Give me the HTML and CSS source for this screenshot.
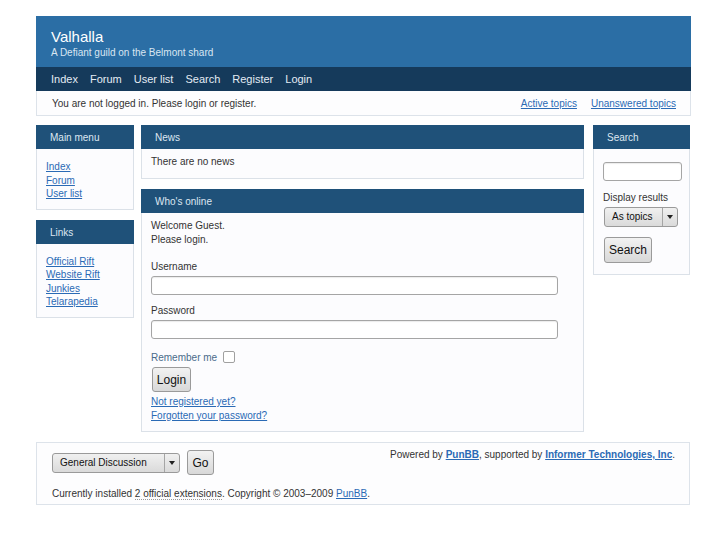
FILE: index.html
```html
<!DOCTYPE html>
<html lang="en">
<head>
    <meta charset="UTF-8">
    <meta name="viewport" content="width=device-width, initial-scale=1.0">
    <title>Valhalla</title>
    <link rel="stylesheet" href="styles.css">
</head>
<body>
    <div id="page">
        <div id="brd-head">
            <p class="title">Valhalla</p>
            <p class="desc">A Defiant guild on the Belmont shard</p>
        </div>
        <div id="brd-navlinks">
            <a href="">Index</a>
            <a href="">Forum</a>
            <a href="">User list</a>
            <a href="">Search</a>
            <a href="">Register</a>
            <a href="">Login</a>
        </div>
        <div id="brd-visit">
            <p>You are not logged in. Please login or register.</p>
            <p class="visit-links"><a href="">Active topics</a><a href="">Unanswered topics</a></p>
        </div>

        <div id="columns">
            <!-- left column -->
            <div class="col-left">
                <div class="box">
                    <h2 class="box-head">Main menu</h2>
                    <div class="box-body links">
                        <a href="">Index</a>
                        <a href="">Forum</a>
                        <a href="">User list</a>
                    </div>
                </div>
                <div class="box">
                    <h2 class="box-head">Links</h2>
                    <div class="box-body links">
                        <a href="">Official Rift</a>
                        <a href="">Website Rift</a>
                        <a href="">Junkies</a>
                        <a href="">Telarapedia</a>
                    </div>
                </div>
            </div>

            <!-- main column -->
            <div class="col-main">
                <div class="box">
                    <h2 class="box-head">News</h2>
                    <div class="box-body news">
                        <p>There are no news</p>
                    </div>
                </div>
                <div class="box">
                    <h2 class="box-head">Who's online</h2>
                    <div class="box-body login">
                        <p>Welcome Guest.<br>Please login.</p>
                        <label class="field-label">Username</label>
                        <div class="text-input"></div>
                        <label class="field-label">Password</label>
                        <div class="text-input"></div>
                        <div class="remember">Remember me <span class="checkbox"></span></div>
                        <button type="button" class="btn login-btn">Login</button>
                        <div class="login-links">
                            <a href="">Not registered yet?</a>
                            <a href="">Forgotten your password?</a>
                        </div>
                    </div>
                </div>
            </div>

            <!-- right column -->
            <div class="col-right">
                <div class="box">
                    <h2 class="box-head">Search</h2>
                    <div class="box-body search">
                        <div class="text-input small"></div>
                        <p class="display">Display results</p>
                        <div class="combo topics"><span class="combo-text">As topics</span><span class="combo-arrow"></span></div>
                        <button type="button" class="btn search-btn">Search</button>
                    </div>
                </div>
            </div>
        </div>

        <div id="brd-footer">
            <div class="foot-top">
                <div class="jump">
                    <div class="combo forum"><span class="combo-text">General Discussion</span><span class="combo-arrow"></span></div>
                    <button type="button" class="btn go-btn">Go</button>
                </div>
                <p class="powered">Powered by <a href="">PunBB</a>, supported by <a href="">Informer Technologies, Inc</a>.</p>
            </div>
            <p class="copyright">Currently installed <span class="dotted">2 official extensions</span>. Copyright &copy; 2003&ndash;2009 <a href="">PunBB</a>.</p>
        </div>
    </div>
</body>
</html>
```

FILE: styles.css
```css
* {
    margin: 0;
    padding: 0;
    box-sizing: border-box;
    font-family: "Liberation Sans", Arial, sans-serif;
}

body {
    background-color: #ffffff;
    color: #333;
    font-size: 10px;
}

a {
    color: #2a6ab5;
}

#page {
    width: 655px;
    margin: 16px 0 0 36px;
}

/* header */

#brd-head {
    background-color: #2b6ea5;
    height: 51px;
    padding: 12px 15px 0;
    color: #fff;
}

#brd-head .title {
    font-size: 15px;
    line-height: 18px;
}

#brd-head .desc {
    font-size: 10px;
    line-height: 13px;
    color: #d9e6f2;
}

#brd-navlinks {
    background-color: #153a5b;
    height: 24px;
    display: flex;
    align-items: center;
    gap: 12px;
    padding-left: 15px;
}

#brd-navlinks a {
    color: #e4ecf4;
    text-decoration: none;
    font-size: 11px;
}

#brd-visit {
    height: 25px;
    display: flex;
    justify-content: space-between;
    align-items: center;
    padding: 0 14px 0 15px;
    border: 1px solid #dde3ea;
    border-top: none;
    background-color: #fdfdfe;
}

.visit-links a {
    margin-left: 14px;
}

/* columns */

#columns {
    display: flex;
    align-items: flex-start;
    margin-top: 9px;
}

.col-left {
    width: 98px;
}

.col-main {
    width: 443px;
    margin-left: 7px;
}

.col-right {
    width: 97px;
    margin-left: 9px;
}

.box {
    margin-bottom: 10px;
    background-color: #fcfcfe;
    border: 1px solid #dbe1e8;
    border-top: none;
}

.box-head {
    background-color: #1f5179;
    color: #dde7f1;
    font-size: 10px;
    font-weight: normal;
    height: 24px;
    line-height: 25px;
    padding-left: 14px;
    margin: 0 -1px;
}

.box-body {
    padding: 10px 9px;
}

.links {
    display: flex;
    flex-direction: column;
    line-height: 13.5px;
    padding: 11px 9px 8px 9px;
}

.links a {
    align-self: flex-start;
}

.news {
    height: 29px;
    padding-top: 7px;
}

.news p {
    line-height: 12px;
}

.login {
    height: 218px;
    padding-top: 6px;
}

.login p {
    line-height: 14px;
    margin-bottom: 14px;
}

.field-label {
    display: block;
    line-height: 12px;
    margin-bottom: 3px;
}

.text-input {
    width: 407px;
    height: 19px;
    border: 1px solid #a5a5a5;
    border-radius: 3px;
    background-color: #fff;
    margin-bottom: 10px;
    box-shadow: inset 0 1px 1px rgba(0, 0, 0, 0.08);
}

.remember {
    display: flex;
    align-items: center;
    gap: 6px;
    color: #4a6b8a;
    margin-top: 12px;
}

.checkbox {
    width: 12px;
    height: 12px;
    border: 1px solid #a0a0a0;
    border-radius: 2px;
    background-color: #fff;
}

.btn {
    background: linear-gradient(#f2f2f2, #d8d8d8);
    border: 1px solid #9a9a9a;
    border-radius: 3px;
    color: #111;
    font-size: 12px;
    cursor: pointer;
}

.login-btn {
    width: 39px;
    height: 25px;
    margin: 4px 0 0 1px;
    display: block;
}

.login-links {
    display: flex;
    flex-direction: column;
    align-items: flex-start;
    line-height: 13.5px;
    margin-top: 3px;
}

.search {
    height: 125px;
    padding: 13px 9px;
}

.text-input.small {
    width: 79px;
    margin-bottom: 11px;
}

.display {
    line-height: 12px;
    margin-bottom: 3px;
}

.combo {
    display: flex;
    height: 20px;
    border: 1px solid #9a9a9a;
    border-radius: 3px;
    background: linear-gradient(#f0f0f0, #dadada);
    color: #111;
    font-size: 10px;
    align-items: center;
}

.combo-text {
    flex: 1;
    padding-left: 7px;
    border-right: 1px solid #a5a5a5;
    height: 100%;
    line-height: 18px;
}

.combo-arrow {
    width: 14px;
    height: 100%;
    position: relative;
}

.combo-arrow::after {
    content: "";
    position: absolute;
    left: 4px;
    top: 7px;
    border-left: 3px solid transparent;
    border-right: 3px solid transparent;
    border-top: 4px solid #222;
}

.topics {
    width: 74px;
    margin-left: 1px;
}

.search-btn {
    width: 48px;
    height: 26px;
    margin: 10px 0 0 1px;
    display: block;
}

/* footer */

#brd-footer {
    height: 63px;
    width: 654px;
    border: 1px solid #dde3ea;
    background-color: #fdfdfe;
    padding: 6px 14px 0 15px;
}

.foot-top {
    display: flex;
    justify-content: space-between;
    align-items: flex-start;
}

.jump {
    display: flex;
    align-items: center;
    gap: 7px;
    margin-top: 1px;
}

.forum {
    width: 128px;
}

.go-btn {
    width: 27px;
    height: 25px;
}

.powered {
    margin-top: 0;
}

.powered a {
    font-weight: bold;
}

.copyright {
    margin-top: 13px;
}

.dotted {
    border-bottom: 1px dotted #999;
}
```
